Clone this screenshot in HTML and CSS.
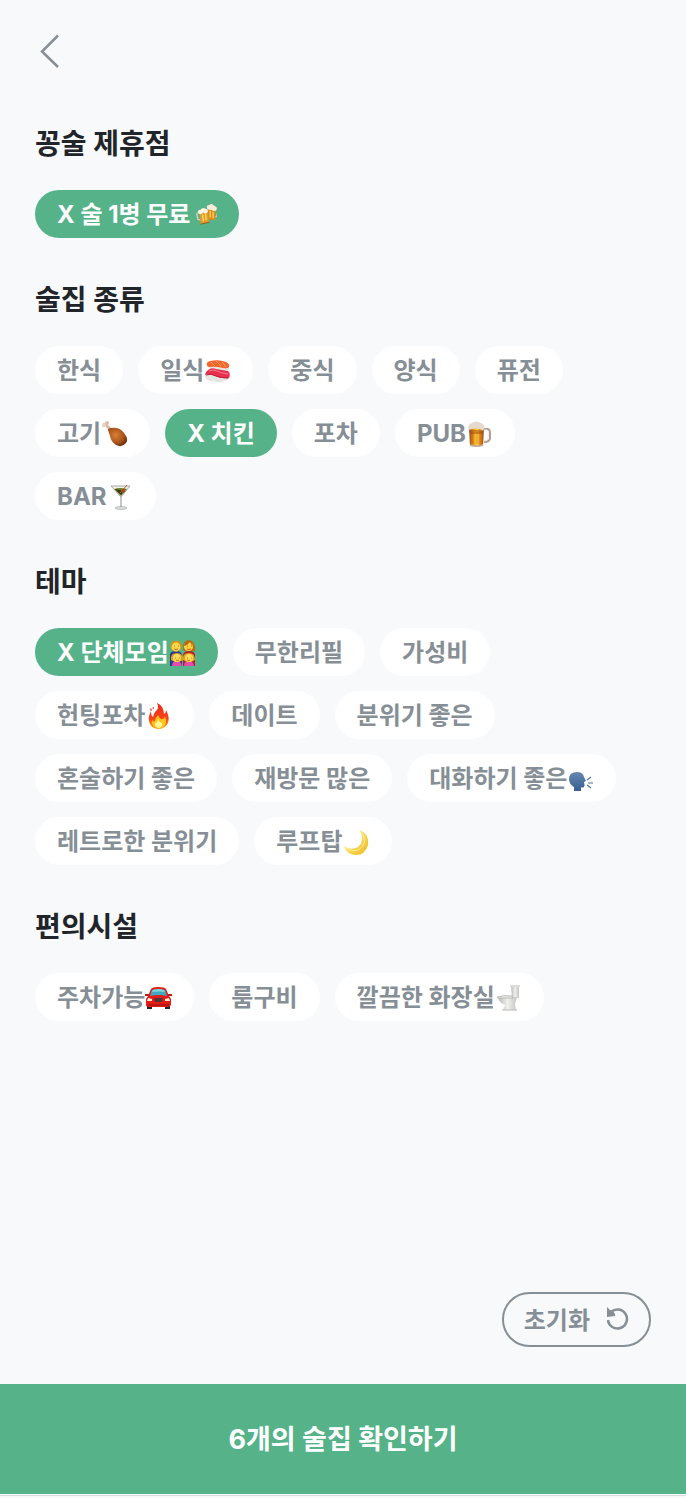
FILE: index.html
```html
<!DOCTYPE html>
<html lang="ko">
<head>
  <meta charset="UTF-8">
  <meta name="viewport" content="width=device-width, initial-scale=1.0">
  <title>술집 필터</title>
  <link rel="stylesheet" href="styles.css">
</head>
<body>
  <header class="top-bar">
    <button class="back-btn" type="button" aria-label="뒤로">
      <svg width="30" height="36" viewBox="0 0 30 36"><path d="M23 2.500L7 18.500L23 34" fill="none" stroke="#868e96" stroke-width="2.500"/></svg>
    </button>
  </header>

  <main class="filters">
    <section class="filter-group">
      <h2>꽁술 제휴점</h2>
      <div class="chips">
        <button class="chip active" type="button">X 술 1병 무료<svg class="emoji" viewBox="-5 1 28 28">
          <path d="M7 12L4 12Q2 12 2 14L3 18Q3 20 6 19" fill="none" stroke="#d9c9ad" stroke-width="1.500"/>
          <path d="M21 8L23 7Q25 8 24 11L23 15Q22 17 20 16" fill="none" stroke="#d9c9ad" stroke-width="1.500"/>
          <path d="M13 7L22 8L21 20L13 19Z" fill="#d98a1c"/>
          <path d="M16 10L16 17M19 11L19 18" stroke="#ffcf55" stroke-width="1.500"/>
          <path d="M13 8Q11 4 15 4Q18 2 20 5Q24 6 22 10Q19 11 17 9Q15 10 13 8Z" fill="#f8ecd9"/>
          <path d="M5 12L13 10L15 22L6 24Z" fill="#e29a24"/>
          <path d="M8 14L9 21M11 13L12 20" stroke="#ffd866" stroke-width="1.500"/>
          <path d="M6 24L15 22" stroke="#8d5921" stroke-width="1"/>
          <path d="M4 13Q2 9 6 9Q8 6 11 8Q15 8 13 12Q11 14 9 12Q6 15 4 13Z" fill="#fff3e2"/>
        </svg></button>
      </div>
    </section>

    <section class="filter-group">
      <h2>술집 종류</h2>
      <div class="chips">
        <button class="chip" type="button">한식</button>
        <button class="chip" type="button">일식<svg class="emoji" viewBox="0 0 27 27">
          <path d="M4 8Q4 11 13 12Q22 14 25 11L24 8Z" fill="#e3e5df"/>
          <path d="M3 7Q2 4 6 3Q15 1 22 4Q26 6 25 9Q24 11 19 10Q12 8 5 9Q3 9 3 7Z" fill="#f4652c"/>
          <path d="M7 4L11 8M12 3L17 8M18 4L22 9" stroke="#ffa36f" stroke-width="1"/>
          <path d="M1 17Q1 23 8 23Q18 26 25 21V17Z" fill="#e3e6df"/>
          <path d="M1 17Q1 14 4 12Q7 9 12 11L24 13Q27 16 25 20Q17 21 11 18Q5 15 1 17Z" fill="#e9304f"/>
          <path d="M5 13Q9 11 13 13T24 16" fill="none" stroke="#ff7c90" stroke-width="1"/>
          <path d="M2 17Q7 15 12 18Q17 20 24 20" fill="none" stroke="#bf1d35" stroke-width="1"/>
        </svg></button>
        <button class="chip" type="button">중식</button>
        <button class="chip" type="button">양식</button>
        <button class="chip" type="button">퓨전</button>
        <button class="chip" type="button">고기<svg class="emoji" viewBox="0 0 27 27">
          <defs><radialGradient id="leg" cx="0.4" cy="0.4" r="0.7"><stop offset="0" stop-color="#d98033"/><stop offset="0.600" stop-color="#a9541b"/><stop offset="1" stop-color="#62290c"/></radialGradient></defs>
          <path d="M5 4L10 9" stroke="#d9b8a5" stroke-width="3"/>
          <circle cx="3" cy="4" r="2.200" fill="#ead2c2"/><circle cx="6" cy="2" r="2" fill="#dcbcab"/>
          <path d="M7 9Q7 7 10 7Q19 6 23 12Q28 18 25 22Q21 27 15 24Q10 21 9 15Z" fill="url(#leg)"/>
        </svg></button>
        <button class="chip active" type="button">X 치킨</button>
        <button class="chip" type="button">포차</button>
        <button class="chip" type="button">PUB<svg class="emoji" viewBox="0 0 27 27">
          <defs><linearGradient id="beer"><stop offset="0" stop-color="#8d3e0b"/><stop offset="0.300" stop-color="#ef9b1b"/><stop offset="0.550" stop-color="#ffcf43"/><stop offset="0.800" stop-color="#dc7d11"/><stop offset="1" stop-color="#8c3b0c"/></linearGradient></defs>
          <path d="M17 8H21Q24 8 24 12V17Q24 21 18 21" fill="none" stroke="#aaa094" stroke-width="2"/>
          <path d="M18 9H21Q23 10 22 17Q22 19 18 20" fill="none" stroke="#eee9df" stroke-width="1"/>
          <path d="M3 6H18L17 25H4Z" fill="url(#beer)"/>
          <path d="M4 9H17V13H4Z" fill="#a24a0d" fill-opacity="0.500"/>
          <path d="M7 11V23M11 11V23M14 11V23" stroke="#8f430f" stroke-opacity="0.350" stroke-width="1"/>
          <path d="M4 23Q11 26 17 23V25Q11 27 4 25Z" fill="#b8aca1"/>
          <path d="M2 7Q2 3 6 2Q10-1 15 2Q20 4 18 8Q17 11 14 8Q9 7 6 8Q3 10 2 7Z" fill="#e6dacd"/>
        </svg></button>
        <button class="chip" type="button">BAR<svg class="emoji" viewBox="0 0 27 27">
          <path d="M4 2H23L14 13Z" fill="#eef0ea" stroke="#a8aca6" stroke-width="1"/>
          <path d="M7 5Q13 3 20 5L14 12Z" fill="#707a24"/>
          <path d="M8 5L14 11L17 7Z" fill="#333c13"/>
          <path d="M20 1L13 9" stroke="#a56d31" stroke-width="1"/>
          <circle cx="16" cy="7" r="2" fill="#a9441d"/>
          <path d="M14 12V23" stroke="#b1b4b4" stroke-width="1.500"/>
          <ellipse cx="14" cy="24" rx="6" ry="1.500" fill="#dddfdf" stroke="#999d9e" stroke-width="0.600"/>
        </svg></button>
      </div>
    </section>

    <section class="filter-group">
      <h2>테마</h2>
      <div class="chips">
        <button class="chip active" type="button">X 단체모임<svg class="emoji" viewBox="0 0 27 27">
          <path d="M1 26V14Q2 11 7 11Q12 11 13 15V26Z" fill="#293c8e"/>
          <path d="M14 26V15Q15 11 20 11Q26 11 26 15V26Z" fill="#b51f32"/>
          <path d="M14 9Q13 1 20 0Q27 1 26 11H15Z" fill="#b66c11"/>
          <circle cx="7" cy="6" r="5.500" fill="#d99516"/><circle cx="7" cy="7" r="4.400" fill="#ffd748"/>
          <circle cx="19.500" cy="6.500" r="4.600" fill="#ffd041"/>
          <path d="M15 6Q19 5 21 2L24 7Q23 0 18 1Q15 2 15 6Z" fill="#b66c11"/>
          <path d="M3 26Q3 21 8 21Q12 21 13 26M15 26Q15 21 20 21Q24 21 25 26" fill="#e44baf"/>
          <path d="M2 20Q1 13 8 13Q14 13 14 20Q8 24 2 20ZM14 20Q13 13 20 13Q26 13 26 20Q20 24 14 20Z" fill="#e2a01c"/>
          <circle cx="8" cy="18" r="4" fill="#ffda57"/><circle cx="20" cy="18" r="4" fill="#ffda57"/>
          <path d="M5 6H5.500M9 6H9.500M18 6H18.500M22 6H22.500M6 18H6.500M10 18H10.500M18 18H18.500M22 18H22.500" stroke="#50300b" stroke-width="1"/>
          <path d="M5 9Q7 10 9 9M18 9Q20 10 22 9M7 20Q8 21 10 20M18 20Q20 21 21 20" fill="none" stroke="#a84f12" stroke-width="0.800"/>
        </svg></button>
        <button class="chip" type="button">무한리필</button>
        <button class="chip" type="button">가성비</button>
        <button class="chip" type="button">헌팅포차<svg class="emoji" viewBox="0 0 27 27">
          <defs><linearGradient id="fire" x2="0" y2="1"><stop offset="0" stop-color="#e92b18"/><stop offset="0.600" stop-color="#f9431b"/><stop offset="1" stop-color="#ffb11c"/></linearGradient></defs>
          <path d="M12 0Q19 3 19 11Q21 10 21 7Q25 14 23 20Q20 26 13 26Q5 25 4 18Q3 14 6 8Q6 13 8 14Q9 9 12 7Q14 4 12 0Z" fill="url(#fire)"/>
          <path d="M13 12Q15 17 18 16Q20 15 20 13Q22 19 20 22Q17 26 12 25Q6 23 7 17Q9 20 10 18Q10 15 13 12Z" fill="#ffc51d"/>
          <path d="M13 16Q14 19 17 20Q18 24 14 25Q9 24 10 20Q12 21 13 16Z" fill="#fff49b"/>
          <path d="M5 6Q7 5 6 8M8 4Q9 5 8 6" fill="none" stroke="#ef3c20" stroke-width="1"/>
        </svg></button>
        <button class="chip" type="button">데이트</button>
        <button class="chip" type="button">분위기 좋은</button>
        <button class="chip" type="button">혼술하기 좋은</button>
        <button class="chip" type="button">재방문 많은</button>
        <button class="chip" type="button">대화하기 좋은<svg class="emoji" viewBox="0 0 27 27">
          <defs><linearGradient id="head" x2="0" y2="1"><stop offset="0" stop-color="#6688b0"/><stop offset="1" stop-color="#365f91"/></linearGradient></defs>
          <path d="M2 13Q2 6 10 6Q16 6 17 11L19 15L17 16Q18 19 17 21Q15 22 14 21V25H7V21Q2 18 2 13Z" fill="url(#head)"/>
          <path d="M20 14L24 11M21 17H26M20 19L24 22" stroke="#4b789f" stroke-width="1.200"/>
        </svg></button>
        <button class="chip" type="button">레트로한 분위기</button>
        <button class="chip" type="button">루프탑<svg class="emoji" viewBox="0 0 27 27">
          <defs><linearGradient id="moon" x2="1" y2="1"><stop offset="0.400" stop-color="#ffe068"/><stop offset="1" stop-color="#eeb517"/></linearGradient></defs>
          <path d="M17 1Q27 6 25 16Q22 26 13 26Q4 26 1 17Q8 22 15 18Q22 13 17 1Z" fill="url(#moon)"/>
          <path d="M3 19Q13 25 19 18Q24 12 19 4" fill="none" stroke="#fff0a4" stroke-width="1"/>
        </svg></button>
      </div>
    </section>

    <section class="filter-group">
      <h2>편의시설</h2>
      <div class="chips">
        <button class="chip" type="button">주차가능<svg class="emoji" viewBox="0 0 27 27">
          <path d="M2 20H7V24H2ZM20 20H25V24H20Z" fill="#252525"/>
          <path d="M6 4Q7 2 13 2Q20 2 21 4L24 11L26 14V20Q25 22 22 22H5Q1 22 1 20V14L3 11Z" fill="#e51b16"/>
          <path d="M7 5Q13 3 20 5L22 11Q13 9 5 11Z" fill="#3faabd"/>
          <path d="M8 5Q14 3 19 5L20 7Q13 6 7 7Z" fill="#7cd5df"/>
          <path d="M0 9H4V11H0ZM23 9H27V11H23Z" fill="#c61915"/>
          <path d="M3 13L7 14V16H2ZM24 13L20 14V16H25Z" fill="#fff1dc"/>
          <path d="M9 13H18L17 17H10Z" fill="#513638"/><path d="M3 20H24" stroke="#901410" stroke-width="1"/>
        </svg></button>
        <button class="chip" type="button">룸구비</button>
        <button class="chip" type="button">깔끔한 화장실<svg class="emoji" viewBox="0 0 27 27">
          <defs><linearGradient id="bowl" x2="1" y2="0"><stop offset="0" stop-color="#b9b9b6"/><stop offset="0.500" stop-color="#f0f0ed"/><stop offset="1" stop-color="#c5c5c2"/></linearGradient></defs>
          <path d="M16 1H24V13H17Z" fill="url(#bowl)"/><path d="M15 0H25V2H15Z" fill="#deddd9"/>
          <path d="M3 12H22L20 19L21 25H8L10 20Q4 18 3 12Z" fill="url(#bowl)"/>
          <path d="M2 12Q8 10 17 11L18 13H3Z" fill="#f2f2ef" stroke="#aaa9a6" stroke-width="0.800"/>
          <path d="M7 25H22" stroke="#bab9b6" stroke-width="1"/>
        </svg></button>
      </div>
    </section>
  </main>

  <div class="reset-row">
    <button class="reset-btn" type="button">초기화
      <svg width="24" height="24" viewBox="0 0 24 24"><path d="M6 5A9.500 9.500 0 1 1 3 13" fill="none" stroke="#868e96" stroke-width="2.500"/><path d="M2 0L5 3L8 4L10 7V9L2 10Z" fill="#868e96"/></svg>
    </button>
  </div>

  <footer class="bottom-bar">
    <button class="submit-btn" type="button">6개의 술집 확인하기</button>
  </footer>
</body>
</html>
```
FILE: styles.css
```css
* {
  box-sizing: border-box;
}

body {
  display: flex;
  flex-direction: column;
  min-height: 100vh;
  margin: 0;
  padding-bottom: 2px;
  background-color: #f8f9fb;
  color: #212529;
  font-family: "Inter", "Noto Sans CJK KR", sans-serif;
}

button {
  border: none;
  font-family: inherit;
  font-weight: 700;
  cursor: pointer;
}

.top-bar {
  padding: 33px 35px 0;
  height: 126px;
}

.back-btn {
  display: block;
  padding: 0;
  background: none;
}

.back-btn svg {
  display: block;
}

.filters {
  flex: 1;
  padding: 0 35px;
}

.filter-group {
  margin-bottom: 44px;
}

h2 {
  margin: 0 0 28px;
  font-size: 28px;
  font-weight: 700;
  line-height: 36px;
}

.chips {
  display: flex;
  flex-wrap: wrap;
  gap: 15px;
  padding-right: 24px;
}

.chip {
  display: flex;
  align-items: center;
  height: 48px;
  padding: 2px 22px 0;
  border-radius: 24px;
  background-color: #fff;
  color: #868e96;
  font-size: 24px;
  line-height: 46px;
  white-space: pre;
}

.chip.active {
  background-color: #56b389;
  color: #fff;
}

.emoji {
  width: 27px;
  height: 27px;
}

.reset-row {
  display: flex;
  justify-content: flex-end;
  padding: 0 35px 37px;
}

.reset-btn {
  display: flex;
  align-items: center;
  gap: 15px;
  height: 55px;
  padding: 0 20px 2px;
  border: 2px solid #868e96;
  border-radius: 28px;
  background: none;
  color: #868e96;
  font-size: 24px;
}

.bottom-bar {
  padding-bottom: 1px;
  border-bottom: 1px solid #d8dadc;
  background-color: #fff;
}

.submit-btn {
  display: block;
  width: 100%;
  height: 110px;
  padding-bottom: 4px;
  background-color: #56b389;
  color: #fff;
  font-size: 27px;
}
```
